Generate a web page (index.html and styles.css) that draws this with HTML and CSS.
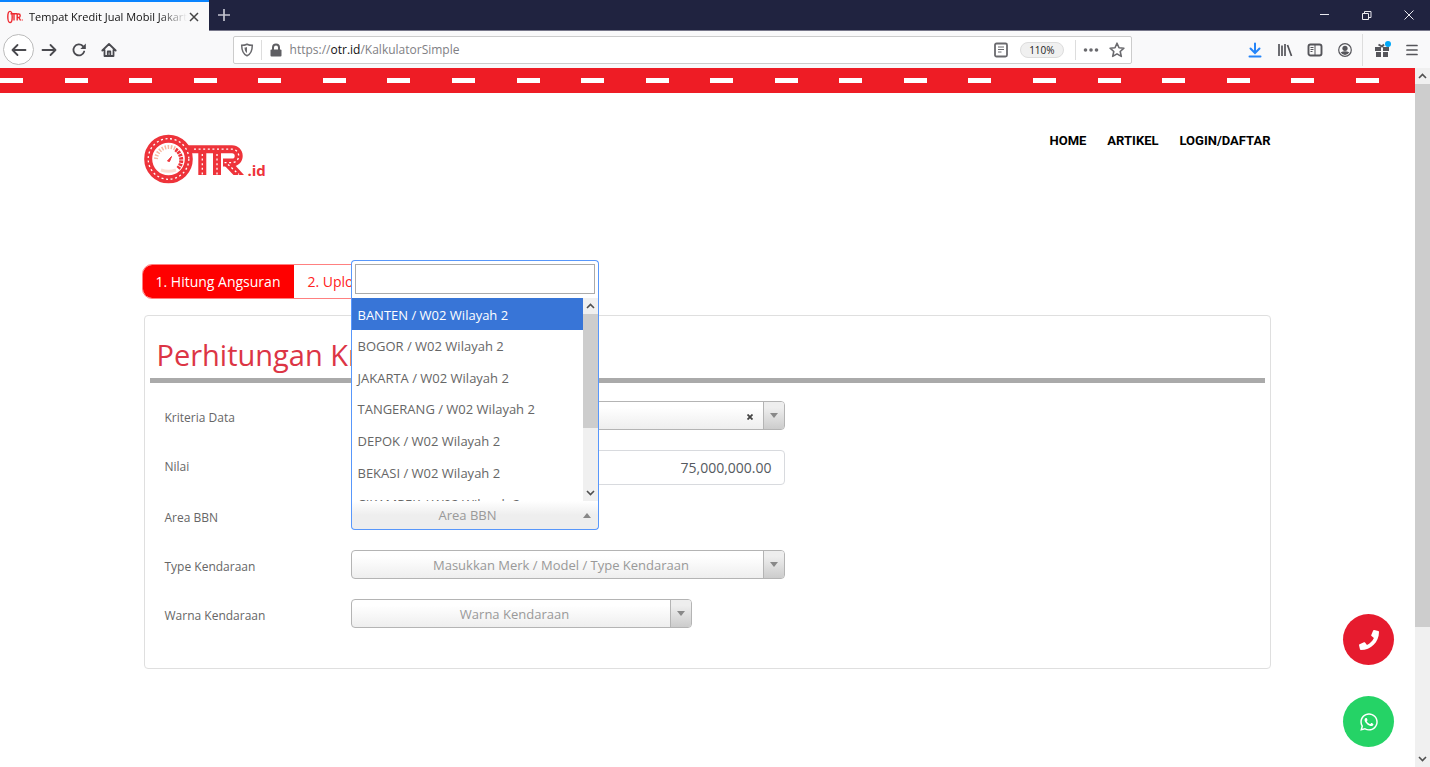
FILE: index.html
```html
<!DOCTYPE html>
<html lang="id">
<head>
<meta charset="utf-8">
<title>Tempat Kredit Jual Mobil Jakarta</title>
<link rel="stylesheet" href="styles.css">
</head>
<body>
<div class="browser">
  <div class="tabstrip">
    <div class="tab">
      <svg class="favicon" width="16" height="16" viewBox="0 0 16 16" fill="none" stroke="#ee2a30"><ellipse cx="3" cy="8" rx="2.2" ry="5.6" stroke-width="1.4"/><path d="M3.5 4.8H10M7 5v6.5M10.2 11.5V5h1.6q1.4 0 1.4 1.7t-1.4 1.7h-1.6M11.8 8.4l1.8 3.1M14.8 11h.8" stroke-width="1.4"/></svg>
      <span class="tab-title">Tempat Kredit Jual Mobil Jakarta</span>
      <button class="tab-close" aria-label="Tutup tab"><svg width="10" height="10" viewBox="0 0 10 10" stroke="#444" stroke-width="1.5"><path d="M1 1l8 8M9 1l-8 8"/></svg></button>
    </div>
    <button class="new-tab" aria-label="Tab baru"><svg width="14" height="14" viewBox="0 0 14 14" stroke="#c4c4cf" stroke-width="1.7"><path d="M7 1v12M1 7h12"/></svg></button>
    <div class="window-controls">
      <button aria-label="Minimalkan"><svg width="10" height="10" viewBox="0 0 10 10" fill="none" stroke="#e8e8ee"><path d="M0 4.5h9"/></svg></button>
      <button aria-label="Pulihkan"><svg width="10" height="10" viewBox="0 0 10 10" fill="none" stroke="#e8e8ee"><path d="M.5 3.5h6v6h-6zM2.500 3.500v-2h6.500v6h-2"/></svg></button>
      <button aria-label="Tutup"><svg width="10" height="10" viewBox="0 0 10 10" fill="none" stroke="#e8e8ee"><path d="M.5.5l9 9M9.500.5l-9 9"/></svg></button>
    </div>
  </div>

  <div class="toolbar">
    <div class="nav-buttons">
      <button class="back" aria-label="Kembali"><svg width="16" height="16" viewBox="0 0 16 16" fill="none" stroke="#4a4a4f" stroke-width="1.800" stroke-linecap="round" stroke-linejoin="round"><path d="M1.500 8h13M6.500 3L1.500 8l5 5"/></svg></button>
      <button aria-label="Maju"><svg width="16" height="16" viewBox="0 0 16 16" fill="none" stroke="#4a4a4f" stroke-width="1.800" stroke-linecap="round" stroke-linejoin="round"><path d="M1.500 8h13M9.500 3l5 5-5 5"/></svg></button>
      <button aria-label="Muat ulang"><svg width="16" height="16" viewBox="0 0 16 16" fill="none" stroke="#4a4a4f" stroke-width="1.800" stroke-linecap="round"><path d="M13.200 9.500A5.500 5.500 0 1 1 11.800 4"/><path d="M14.800 1.500v5.500H9.300z" fill="#4a4a4f" stroke="none"/></svg></button>
      <button aria-label="Beranda"><svg width="16" height="16" viewBox="0 0 16 16" fill="none" stroke="#4a4a4f" stroke-width="1.800" stroke-linecap="round" stroke-linejoin="round"><path d="M1.300 8.500L8 2l6.700 6.500M3.500 8v6h9V8"/><path d="M6.800 13.500V9.500h2.500v4"/></svg></button>
    </div>
    <div class="urlbar">
      <svg width="14" height="14" viewBox="0 0 14 14" fill="none" stroke="#6a6a6e"><path d="M7 1.200C5.300 2 3.500 2.300 1.700 2.300 1.700 7.500 2.800 11 7 12.800 11.200 11 12.300 7.500 12.300 2.300 10.500 2.300 8.700 2 7 1.200z" stroke-width="1.500"/><path d="M7 4C6 4.400 5.400 4.500 4.500 4.600c.1 2.700.7 4.300 2.500 5.400z" fill="#6a6a6e" stroke="none"/></svg>
      <i class="url-sep"></i>
      <svg width="14" height="14" viewBox="0 0 14 14" fill="none" stroke="#5f5f63" stroke-width="2"><path d="M4 7V4.500a3 3 0 0 1 6 0V7"/><rect x="1.500" y="6.500" width="11" height="7" rx="1" fill="#5f5f63" stroke="none"/></svg>
      <span class="url">https://<b>otr.id</b>/KalkulatorSimple</span>
      <svg width="14" height="16" viewBox="0 0 14 16" fill="none" stroke="#6a6a6e"><rect x="1" y="1.500" width="12" height="13" rx="1.500" stroke-width="1.800"/><path d="M4 5h6M4 7.500h6M4 10h3.500"/></svg>
      <span class="zoom">110%</span>
      <i class="url-sep"></i>
      <svg width="16" height="6" viewBox="0 0 16 6" fill="#6a6a6e"><circle cx="2.500" cy="3" r="1.800"/><circle cx="8" cy="3" r="1.800"/><circle cx="13.500" cy="3" r="1.800"/></svg>
      <svg class="star" width="16" height="16" viewBox="0 0 16 16" fill="none" stroke="#6a6a6e" stroke-width="1.600" stroke-linejoin="round"><path d="M8 1.200l2 4.500 4.900.5-3.700 3.300 1.100 4.900L8 11.900l-4.300 2.500 1.100-4.900L1.100 6.200 6 5.700z"/></svg>
    </div>
    <div class="tools">
      <button aria-label="Unduhan"><svg width="16" height="16" viewBox="0 0 16 16" fill="none" stroke="#2484f8" stroke-width="2" stroke-linecap="round"><path d="M8 1.500v9M3.500 6.500L8 11l4.500-4.500M2.500 14.500h11"/></svg></button>
      <button aria-label="Pustaka"><svg width="16" height="16" viewBox="0 0 16 16" fill="none" stroke="#55555a" stroke-width="1.700"><path d="M2 2v12M5 3.500V14M8 2v12M10.500 3l4 11"/></svg></button>
      <button aria-label="Bilah samping"><svg width="16" height="16" viewBox="0 0 16 16" fill="none" stroke="#55555a"><rect x="1.500" y="2.500" width="13" height="11" rx="2" stroke-width="1.900"/><path d="M8 3v10M3.500 5.500h3M3.500 7.500h3M3.500 9.500h2"/></svg></button>
      <button aria-label="Akun"><svg width="16" height="16" viewBox="0 0 16 16" fill="#55555a"><circle cx="8" cy="8" r="6.300" fill="none" stroke="#55555a" stroke-width="1.200"/><circle cx="8" cy="6.300" r="2.600"/><path d="M3.700 10.200q4.300-2 8.600 0-1.600 2.900-4.300 2.900t-4.300-2.900z"/></svg></button>
      <i class="tool-sep"></i>
      <button class="gift" aria-label="Yang baru"><svg width="18" height="18" viewBox="0 0 18 18" fill="#55555a"><path d="M2 6h6v4H2zM10 6h6v4h-6zM3 11h5v5H3zM10 11h5v5h-5z"/><path d="M5.500 3.500L9 5.500l2-2" fill="none" stroke="#55555a" stroke-width="2"/><circle cx="15" cy="3" r="3" fill="#00a8f8"/></svg></button>
      <button aria-label="Menu"><svg width="14" height="14" viewBox="0 0 14 14" stroke="#55555a" stroke-width="1.700" stroke-linecap="round"><path d="M2 2.500h10M2 7h10M2 11.500h10"/></svg></button>
    </div>
  </div>

  <div class="viewport">
    <div class="page">
      <div class="road"><i></i><i></i><i></i><i></i><i></i><i></i><i></i><i></i><i></i><i></i><i></i><i></i><i></i><i></i><i></i><i></i><i></i><i></i><i></i><i></i><i></i><i></i></div>
      <div class="container">
        <header class="site-header">
          <a class="logo" href="#" aria-label="OTR.id">
            <svg width="102" height="50" viewBox="0 0 102 50" fill="none">
              <g stroke="#ee333a" stroke-width="8">
                <path d="M43 15.200H88a6.700 6.700 0 0 1 0 13.400H79M58.300 15.200V41M73 15.200V41"/>
                <circle cx="24.500" cy="25" r="20.300" fill="#fff"/>
              </g>
              <path d="M79 30l10.500 11H100L89 29z" fill="#ee333a"/>
              <g stroke="#fff" stroke-width="1.300" stroke-dasharray="2 2.600">
                <circle cx="24.500" cy="25" r="20.300"/>
                <path d="M50 15.200H88a6.700 6.700 0 0 1 0 13.400H79M58.300 20V41M73 20V41M84 30.500l11 10"/>
              </g>
              <path d="M12 25a13 13 0 0 1 20-10" stroke="#f8b8a0" stroke-width="4" stroke-dasharray="1.500 1.500"/>
              <path d="M31.500 15.500A12.500 12.500 0 0 1 34 34.500" stroke="#ee333a" stroke-width="4" stroke-dasharray="2.400 .8"/>
              <path d="M17 36q7.500 2.500 15 0" stroke="#fbded4" stroke-width="3"/>
              <path d="M23.500 27l4-4.500-2 5z" fill="#ee333a" stroke="#ee333a"/>
            </svg><span>.id</span>
          </a>
          <nav class="site-nav"><a href="#">HOME</a><a href="#">ARTIKEL</a><a href="#">LOGIN/DAFTAR</a></nav>
        </header>

        <div class="steps"><button class="step active">1. Hitung Angsuran</button><button class="step">2. Upload Dokumen</button></div>

        <section class="card">
          <h1>Perhitungan Kredit</h1>
          <form class="form">
            <div class="row">
              <label for="kriteria">Kriteria Data</label>
              <div class="combo">
                <select id="kriteria"><option></option></select>
                <button type="button" class="clear" aria-label="Hapus"><svg width="6" height="6" viewBox="0 0 6 6" stroke="#444" stroke-width="1.800"><path d="M.5.5l5 5M5.500.5l-5 5"/></svg></button>
                <span class="arrow"><svg width="8" height="5" viewBox="0 0 8 5"><path d="M0 0h8L4 5z" fill="#888"/></svg></span>
              </div>
            </div>
            <div class="row">
              <label for="nilai">Nilai</label>
              <input id="nilai" class="amount" type="text" value="75,000,000.00">
            </div>
            <div class="row">
              <label for="area">Area BBN</label>
              <div class="combo open">
                <select id="area"><option>Area BBN</option></select>
                <span class="arrow"><svg width="8" height="5" viewBox="0 0 8 5"><path d="M0 5h8L4 0z" fill="#888"/></svg></span>
                <div class="drop">
                  <input class="search" type="text" aria-label="Cari area">
                  <div class="results">
                    <ul role="listbox" aria-label="Area BBN">
                      <li role="option" class="hot" aria-selected="true">BANTEN / W02 Wilayah 2</li>
                      <li role="option">BOGOR / W02 Wilayah 2</li>
                      <li role="option">JAKARTA / W02 Wilayah 2</li>
                      <li role="option">TANGERANG / W02 Wilayah 2</li>
                      <li role="option">DEPOK / W02 Wilayah 2</li>
                      <li role="option">BEKASI / W02 Wilayah 2</li>
                      <li role="option">CIKAMPEK / W02 Wilayah 2</li>
                    </ul>
                    <div class="scrollbar">
                      <svg width="15" height="16" viewBox="0 0 15 16" fill="none" stroke="#505050" stroke-width="1.600"><path d="M4 10l3.500-3.500L11 10"/></svg>
                      <i class="thumb list-thumb"></i>
                      <svg class="down" width="15" height="16" viewBox="0 0 15 16" fill="none" stroke="#505050" stroke-width="1.600"><path d="M4 6l3.500 3.500L11 6"/></svg>
                    </div>
                  </div>
                </div>
              </div>
            </div>
            <div class="row">
              <label for="type">Type Kendaraan</label>
              <div class="combo">
                <select id="type"><option>Masukkan Merk / Model / Type Kendaraan</option></select>
                <span class="arrow"><svg width="8" height="5" viewBox="0 0 8 5"><path d="M0 0h8L4 5z" fill="#888"/></svg></span>
              </div>
            </div>
            <div class="row">
              <label for="warna">Warna Kendaraan</label>
              <div class="combo medium">
                <select id="warna"><option>Warna Kendaraan</option></select>
                <span class="arrow"><svg width="8" height="5" viewBox="0 0 8 5"><path d="M0 0h8L4 5z" fill="#888"/></svg></span>
              </div>
            </div>
          </form>
        </section>
      </div>
      <div class="contact">
        <a class="phone" href="#" aria-label="Telepon"><svg width="20" height="20" viewBox="0 0 512 512" fill="#fff"><path d="M493.400 24.600l-104-24c-11.300-2.600-22.900 3.300-27.500 13.900l-48 112c-4.200 9.800-1.400 21.300 6.900 28l60.600 49.600c-36 76.700-98.900 140.500-177.200 177.200l-49.600-60.600c-6.800-8.300-18.200-11.100-28-6.900l-112 48C3.900 366.500-2 378.100.6 389.400l24 104C27.100 504.200 36.700 512 48 512c256.100 0 464-207.500 464-464 0-11.200-7.700-20.900-18.600-23.400z"/></svg></a>
        <a class="whatsapp" href="#" aria-label="WhatsApp"><svg width="18" height="20" viewBox="0 0 448 512" fill="#fff"><path d="M380.900 97.100C339 55.100 283.200 32 223.900 32c-122.400 0-222 99.600-222 222 0 39.100 10.200 77.300 29.600 111L0 480l117.700-30.900c32.400 17.700 68.900 27 106.100 27h.1c122.300 0 224.100-99.600 224.100-222 0-59.300-25.200-115-67.100-157zm-157 341.600c-33.200 0-65.700-8.900-94-25.700l-6.700-4-69.800 18.300L72 359.200l-4.400-7c-18.500-29.400-28.200-63.300-28.200-98.200 0-101.700 82.800-184.500 184.600-184.500 49.300 0 95.600 19.200 130.400 54.100 34.800 34.900 56.200 81.200 56.100 130.500 0 101.800-84.900 184.600-186.600 184.600zm101.200-138.200c-5.500-2.800-32.800-16.200-37.900-18-5.100-1.900-8.800-2.800-12.500 2.800-3.700 5.600-14.300 18-17.600 21.800-3.200 3.700-6.500 4.200-12 1.400-32.600-16.300-54-29.100-75.500-66-5.700-9.800 5.700-9.100 16.300-30.300 1.800-3.700.9-6.900-.5-9.700-1.400-2.800-12.500-30.100-17.100-41.200-4.500-10.800-9.100-9.300-12.500-9.500-3.200-.2-6.900-.2-10.600-.2-3.700 0-9.700 1.400-14.800 6.900-5.100 5.600-19.400 19-19.400 46.300 0 27.300 19.900 53.700 22.600 57.400 2.800 3.700 39.100 59.700 94.800 83.800 35.200 15.200 49 16.500 66.600 13.900 10.700-1.600 32.800-13.400 37.400-26.400 4.600-13 4.600-24.100 3.200-26.400-1.300-2.500-5-3.900-10.500-6.600z"/></svg></a>
      </div>
    </div>
    <div class="scrollbar">
      <svg width="15" height="16" viewBox="0 0 15 16" fill="none" stroke="#505050" stroke-width="1.600"><path d="M4 10l3.500-3.500L11 10"/></svg>
      <i class="thumb page-thumb"></i>
      <svg class="down" width="15" height="16" viewBox="0 0 15 16" fill="none" stroke="#505050" stroke-width="1.600"><path d="M4 6l3.500 3.500L11 6"/></svg>
    </div>
  </div>
</div>
</body>
</html>
```
FILE: styles.css
```css
* { box-sizing: border-box; }
body { margin: 0; font-family: "Open Sans", "Noto Sans", sans-serif; color: #666; background: #fff; }
button { border: 0; padding: 0; background: none; font: inherit; color: inherit; }
a { color: inherit; text-decoration: none; }
svg { display: block; flex: none; }

.browser { display: flex; flex-direction: column; height: 100vh; overflow: hidden; }

.tabstrip { display: flex; align-items: center; height: 31px; flex: none; background: #202340; border-bottom: 1px solid #77778a; }
.tab { display: flex; align-items: center; align-self: stretch; width: 209px; margin-bottom: -1px; padding: 0 8px 0 7px; gap: 6px; background: #f9f9fa; border-top: 2px solid #0a84ff; }
.tab-title { flex: 1; margin-right: -6px; overflow: hidden; white-space: nowrap; font-size: 11px; line-height: 16px; color: #111; mask-image: linear-gradient(to left, transparent, #000 28px); }
.tab-close { display: flex; padding: 3px 2px; }
.new-tab { padding: 8px; }
.window-controls { display: flex; margin-left: auto; gap: 32px; padding-right: 16px; }

.toolbar { display: flex; align-items: center; height: 37px; flex: none; padding: 0 11px 0 3px; background: #f9f9fa; }
.nav-buttons { display: flex; align-items: center; gap: 14px; flex: 230; }
.back { display: flex; align-items: center; justify-content: center; width: 31px; height: 31px; border: 1px solid #bbb; border-radius: 50%; background: #fff; margin-right: -7px; }
.urlbar { display: flex; align-items: center; gap: 7px; flex: 0 1 899px; height: 28px; padding: 0 6px; border: 1px solid #ccc; border-radius: 2px; background: #fff; }
.url-sep { width: 1px; height: 20px; background: #ddd; }
.url { flex: 1; font-size: 12px; line-height: 18px; color: #808084; }
.url b { font-weight: 400; color: #111; }
.zoom { margin: 0 4px 0 5px; padding: 0 8px; border: 1px solid #ddd; border-radius: 8px; background: #f0f0f0; font-size: 10px; line-height: 14px; color: #222; }
.star { margin-left: 3px; }
.tools { display: flex; align-items: center; justify-content: flex-end; gap: 14px; flex: 288; }
.tool-sep { width: 1px; height: 32px; margin: 0 -4px 0 -5px; background: #ddd; }

.viewport { display: flex; flex: 1; min-height: 0; }
.page { position: relative; flex: 1; min-width: 0; overflow: hidden; }
.scrollbar { display: flex; flex-direction: column; width: 15px; flex: none; background: #f0f0f0; }
.thumb { background: #cdcdcd; }
.page-thumb { height: 543px; }
.list-thumb { height: 114px; }
.down { margin-top: auto; }

.road { display: flex; align-items: center; justify-content: space-between; height: 25px; padding-right: 36px; background: #ee1c25; }
.road i { width: 23px; height: 5px; background: #fff; }

.container { max-width: 1128px; margin: 0 auto; }
.site-header { display: flex; justify-content: space-between; padding-top: 41px; }
.logo { display: flex; align-items: flex-end; gap: 2px; height: 50px; }
.logo span { font-size: 15px; font-weight: 700; line-height: 28px; color: #ee333a; }
.site-nav { display: flex; gap: 21px; padding-right: 1px; font-family: Roboto, sans-serif; font-size: 13px; font-weight: 700; line-height: 14px; color: #000; }

.steps { display: inline-flex; margin: 80px 0 16px -2px; border: 1px solid #ff8080; border-radius: 10px; overflow: hidden; }
.step { padding: 0 14px 0 13px; font-size: 14px; line-height: 33px; color: #f22; }
.step.active { background: #f00; color: #fff; }

.card { margin-right: 1px; padding: 17px 5px 36px; border: 1px solid #dfdfdf; border-radius: 4px; }
.card h1 { margin: 0 0 18px; padding: 0 7px 2px; border-bottom: 5px solid #aaa; font-size: 29px; font-weight: 400; line-height: 43px; color: #dc3545; }
.form { display: flex; flex-direction: column; gap: 16px; padding-left: 15px; }
.row { display: grid; grid-template-columns: 186px 434px; align-items: start; }
.row label { font-size: 12px; line-height: 33px; }

.combo { display: flex; position: relative; height: 29px; margin-bottom: 4px; border: 1px solid #b4b4b4; border-radius: 4px; background: linear-gradient(#fff 20%, #eee 100%); }
.combo.medium { width: 341px; }
.combo select { flex: 1; min-width: 0; padding: 0 0 0 8px; border: 0; background: none; appearance: none; font: 13px "Open Sans", sans-serif; color: #999; text-align-last: center; }
.clear { padding: 2px 10px 0; }
.arrow { display: flex; align-items: center; justify-content: center; width: 21px; border-left: 1px solid #b4b4b4; border-radius: 0 3px 3px 0; background: linear-gradient(#eee 20%, #ccc 100%); }
.amount { height: 35px; padding: 0 12px; border: 1px solid #d8dade; border-radius: 4px; background: #fff; font: 14px "Open Sans", sans-serif; color: #555a60; text-align: right; }

.combo.open { width: 248px; border-color: #5897fb; border-top: 0; border-radius: 0 0 4px 4px; background: linear-gradient(#fff, #eee 50%); }
.open .arrow { border: 0; background: none; }
.open select { padding: 0 5px 0 12px; }
.drop { position: absolute; left: -1px; right: -1px; bottom: 100%; z-index: 2; border: 1px solid #5897fb; border-bottom: 0; border-radius: 4px 4px 0 0; background: #fff; }
.search { display: block; width: calc(100% - 6px); height: 30px; margin: 3px 3px 4px; border: 1px solid #aaa; }
.results { display: flex; height: 203px; overflow: hidden; }
.results ul { display: grid; grid-auto-rows: 1fr; flex: 1; height: 221px; margin: 0; padding: 0; list-style: none; }
.results li { display: flex; align-items: center; padding: 2px 6px 0; font-size: 13px; white-space: nowrap; }
.results .hot { background: #3875d7; color: #fff; }

.contact { position: absolute; right: 21px; bottom: 20px; display: grid; gap: 31px; }
.contact a { display: flex; align-items: center; justify-content: center; width: 51px; height: 51px; border-radius: 50%; }
.phone { background: #e61b2e; }
.whatsapp { background: #25d366; }
```
